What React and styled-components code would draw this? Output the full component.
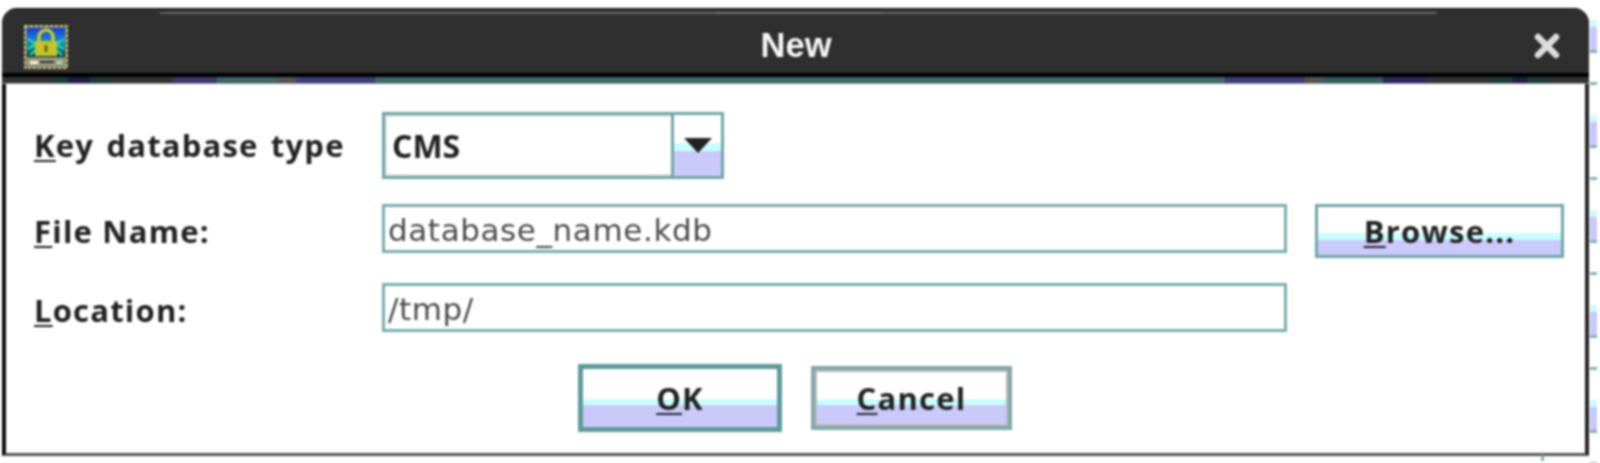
import React from 'react';
import styled, { createGlobalStyle, css } from 'styled-components';

const GlobalStyle = createGlobalStyle`
  html, body {
    margin: 0;
    padding: 0;
    background: #fff;
  }
`;

const Page = styled.div`
  display: flex;
  align-items: flex-start;
  width: 1600px;
  height: 463px;
  padding: 8px 0 0 2px;
  box-sizing: border-box;
  overflow: hidden;
  filter: blur(0.8px);
`;

const Window = styled.div`
  position: relative;
  width: 1587px;
  height: 448px;
  display: flex;
  flex-direction: column;
  flex: none;
  &::after {
    content: '';
    position: absolute;
    left: 1539px;
    top: 447px;
    width: 3px;
    height: 6px;
    background: #7fb0b0;
  }
`;

const TitleBar = styled.div`
  position: relative;
  height: 65px;
  flex: none;
  display: flex;
  align-items: center;
  justify-content: space-between;
  padding: 9px 29px 0 22px;
  box-sizing: border-box;
  background: #2f2f2f;
  border-top: 1px solid #111;
  border-radius: 15px 15px 0 0;
  &::before {
    content: '';
    position: absolute;
    left: 158px;
    right: 152px;
    top: 3px;
    height: 2px;
    background: linear-gradient(to right, #666 0 555px, #777 555px 722px, #666 722px);
  }
`;

const TitleText = styled.div`
  flex: 1;
  text-align: center;
  padding-right: 10px;
  font: bold 34.5px 'Liberation Sans', Arial, sans-serif;
  color: #f6f6f6;
`;

const CloseIcon = styled.svg`
  width: 26px;
  height: 26px;
  flex: none;
`;

const LockIcon = styled.svg`
  width: 44px;
  height: 44px;
  margin-top: 3px;
  flex: none;
`;

const Divider = styled.div`
  flex: none;
  height: 4px;
  background: #000;
`;

const ColorStrip = styled.div`
  flex: none;
  height: 6px;
  background: linear-gradient(
    to right,
    #333 0 48px,
    #1d3a3a 48px 66px,
    #1e1e48 66px 88px,
    #1d3a3a 88px 108px,
    #333 108px 171px,
    #39396e 171px 215px,
    #3a6666 215px 275px,
    #555 275px 294px,
    #3d3d78 294px 373px,
    #3d6b6b 373px 1223px,
    #3d3d78 1223px 1303px,
    #555 1303px 1320px,
    #2f5c5c 1320px 1381px,
    #28285c 1381px 1425px,
    #333 1425px 1488px,
    #1d3a3a 1488px 1510px,
    #1e1e48 1510px 1525px,
    #1d3a3a 1525px 1545px,
    #333 1545px
  );
  border-bottom: 1px solid #999;
`;

const Body = styled.div`
  flex: 1;
  min-height: 0;
  background: #fff;
  box-sizing: border-box;
  padding: 28px 24px 0 28px;
  border-left: 4px solid #0a0a0a;
  border-right: 4px solid #222;
  border-bottom: 3px solid #555;
`;

const FormGrid = styled.div`
  display: grid;
  grid-template-columns: 348px 905px 249px;
  column-gap: 0;
  align-items: start;
`;

const Label = styled.label`
  font: bold 31px 'Open Sans', sans-serif;
  letter-spacing: 1.2px;
  word-spacing: ${(p) => p.$wordGap || 0}px;
  color: #222;
  white-space: nowrap;
  margin-top: ${(p) => p.$top}px;
`;

const Mnemonic = styled.span`
  text-decoration: underline;
  text-decoration-thickness: 2px;
  text-underline-offset: 3px;
`;

const buttonFace = (white, cyan) => css`
  background: linear-gradient(
    to bottom,
    #fff 0 ${white}px,
    #c8ffff ${white}px ${cyan}px,
    #cacafa ${cyan}px
  );
`;

const Combo = styled.div`
  grid-column: 2;
  width: 342px;
  height: 67px;
  display: flex;
  box-sizing: border-box;
  border: 3px solid #6fa6a6;
  margin-bottom: 25px;
`;

const ComboValue = styled.div`
  flex: 1;
  display: flex;
  align-items: center;
  padding-left: 5px;
  border: 2px solid #ddd;
  border-right: 0;
  font: bold 32px 'Open Sans', sans-serif;
  color: #222;
`;

const ComboArrow = styled.div`
  width: 50px;
  flex: none;
  border-left: 3px solid #6fa6a6;
  display: flex;
  justify-content: center;
  padding-top: 23px;
  box-sizing: border-box;
  ${buttonFace(28, 36)}
`;

const Arrow = styled.svg`
  width: 28px;
  height: 15px;
`;

const TextField = styled.input`
  display: block;
  width: 905px;
  height: 49px;
  box-sizing: border-box;
  padding: 3px 0 0 3px;
  border: 3px solid #7aadad;
  outline: none;
  background: #fff;
  font: 400 31px 'DejaVu Sans', sans-serif;
  letter-spacing: 0.6px;
  color: #4c4c4c;
  margin-bottom: ${(p) => p.$gap}px;
`;

const Button = styled.button`
  box-sizing: border-box;
  padding: 0;
  margin: 0;
  font: bold 31px 'Open Sans', sans-serif;
  letter-spacing: 1.2px;
  color: #222;
`;

const BrowseButton = styled(Button)`
  margin-left: 28px;
  width: 249px;
  height: 54px;
  border: 3px solid #6fa6a6;
  ${buttonFace(26, 33)}
`;

const ButtonRow = styled.div`
  display: flex;
  justify-content: center;
  align-items: center;
  gap: 29px;
  margin-top: 7px;
  padding-right: 5px;
`;

const DialogButton = styled(Button)`
  height: ${(p) => (p.$primary ? 68 : 64)}px;
  width: ${(p) => (p.$primary ? 204 : 201)}px;
  border: ${(p) => (p.$primary ? '5px solid #5f9a9a' : '4px solid #7fa8a8')};
  box-shadow: ${(p) => (p.$primary ? 'none' : 'inset 0 0 0 2px #bbb')};
  ${(p) => (p.$primary ? buttonFace(30, 36) : buttonFace(29, 35))}
`;

const BehindWindow = styled.div`
  flex: none;
  width: 7px;
  height: 455px;
  margin-left: 1px;
  background: repeating-linear-gradient(
    to bottom,
    #fff 0 12px,
    #d0fbfb 12px 19px,
    #c8c8fa 19px 42px,
    #7fb4b4 42px 45px,
    #fff 45px 74px,
    #7fb4b4 74px 77px,
    #fff 77px 95px
  );
`;

function Lock() {
  return (
    <LockIcon viewBox="0 0 44 44">
      <defs>
        <linearGradient id="sky" x1="0" y1="0" x2="0" y2="1">
          <stop offset="0" stopColor="#1a3ae0" />
          <stop offset="0.35" stopColor="#1a7ad0" />
          <stop offset="0.6" stopColor="#0a9a9a" />
          <stop offset="1" stopColor="#0a3c38" />
        </linearGradient>
      </defs>
      <rect x="0.5" y="0.5" width="43" height="43" fill="#77775a" />
      <rect x="1" y="1" width="42" height="42" fill="none" stroke="#c8c880" strokeWidth="2" strokeDasharray="3 2" />
      <rect x="3" y="3" width="38" height="29" fill="url(#sky)" />
      <path d="M4 14l8 5M4 24l7-4M40 14l-8 5M40 24l-7-4M6 30l6-5M38 30l-6-5" stroke="#30e0d0" strokeWidth="2" />
      <path d="M15 17v-5a7 7 0 0 1 14 0v5" fill="none" stroke="#c8c830" strokeWidth="3.5" />
      <rect x="11" y="16" width="22" height="15" fill="#c4c428" />
      <rect x="20.5" y="20" width="3" height="7" fill="#6a6a10" />
      <rect x="3" y="33" width="38" height="8" fill="#9a9a88" />
      <rect x="6" y="36" width="8" height="3" fill="#f4f4e0" />
      <rect x="16" y="36" width="14" height="2" fill="#33332a" />
      <rect x="33" y="36" width="5" height="3" fill="#a0e0b0" />
    </LockIcon>
  );
}

export default function App() {
  return (
    <>
      <GlobalStyle />
      <Page>
        <Window>
          <TitleBar>
            <Lock />
            <TitleText>New</TitleText>
            <CloseIcon viewBox="0 0 26 26">
              <path d="M4 4L22 22M22 4L4 22" stroke="#dcdcdc" strokeWidth="6.5" strokeLinecap="round" />
            </CloseIcon>
          </TitleBar>
          <Divider />
          <ColorStrip />
          <Body>
            <FormGrid>
              <Label $top={12} $wordGap={3}>
                <Mnemonic>K</Mnemonic>ey database type
              </Label>
              <Combo>
                <ComboValue>CMS</ComboValue>
                <ComboArrow>
                  <Arrow viewBox="0 0 28 15">
                    <path d="M0 0H28L14 15Z" fill="#222" />
                  </Arrow>
                </ComboArrow>
              </Combo>
              <span />
              <Label $top={6}>
                <Mnemonic>F</Mnemonic>ile Name:
              </Label>
              <TextField readOnly value="database_name.kdb" $gap={30} />
              <BrowseButton>
                <Mnemonic>B</Mnemonic>rowse...
              </BrowseButton>
              <Label $top={6}>
                <Mnemonic>L</Mnemonic>ocation:
              </Label>
              <TextField readOnly value="/tmp/" $gap={25} />
            </FormGrid>
            <ButtonRow>
              <DialogButton $primary>
                <Mnemonic>O</Mnemonic>K
              </DialogButton>
              <DialogButton>
                <Mnemonic>C</Mnemonic>ancel
              </DialogButton>
            </ButtonRow>
          </Body>
        </Window>
        <BehindWindow />
      </Page>
    </>
  );
}
